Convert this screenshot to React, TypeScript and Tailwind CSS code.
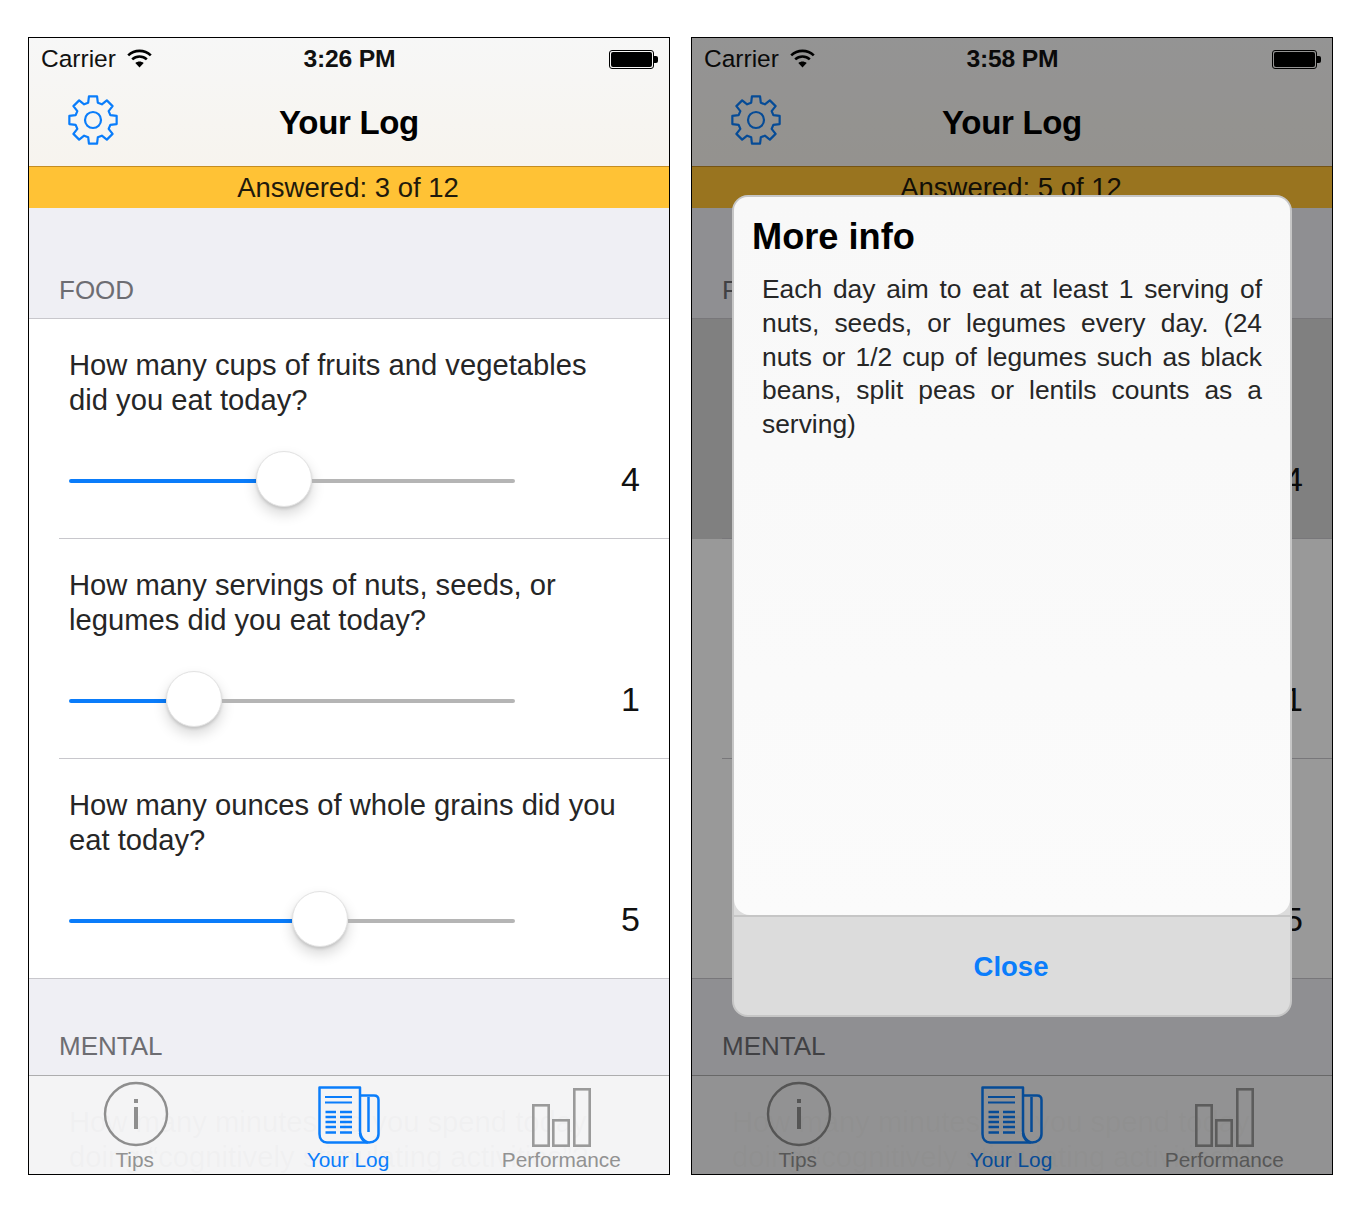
import React from "react";

const BLUE = "#0a7dfb";

function gearPath() {
  const cx = 26, cy = 26, teeth = 8;
  const R = 24, r = 18;
  const pts: string[] = [];
  for (let i = 0; i < teeth; i++) {
    const a = (i * 2 * Math.PI) / teeth - Math.PI / 2;
    const seg = [
      [-0.27, r],
      [-0.17, R],
      [0.17, R],
      [0.27, r],
    ];
    for (const [d, rad] of seg) {
      const t = a + d;
      pts.push(`${(cx + rad * Math.cos(t)).toFixed(2)} ${(cy + rad * Math.sin(t)).toFixed(2)}`);
    }
  }
  return "M" + pts.join("L") + "Z";
}

function Gear() {
  return (
    <svg width="52" height="52" viewBox="0 0 52 52" fill="none" stroke={BLUE} strokeWidth="2.2" strokeLinejoin="round">
      <path d={gearPath()} />
      <circle cx="26" cy="26" r="8" />
    </svg>
  );
}

function Wifi() {
  return (
    <svg width="25" height="19" viewBox="0 0 25 19" fill="none" stroke="#000" strokeWidth="2.6">
      <path d="M1.2 6.4C7.5 .4 17.5 .4 23.8 6.4" />
      <path d="M5.2 10.4C9.3 6.6 15.7 6.6 19.8 10.4" />
      <path d="M12.5 18.6L8.3 14C10.7 12 14.3 12 16.7 14Z" fill="#000" stroke="none" />
    </svg>
  );
}

function Battery() {
  return (
    <div className="flex items-center">
      <div className="w-[45px] h-[19px] rounded-[3px] border border-black p-px">
        <div className="w-full h-full rounded-[2px] bg-black" />
      </div>
      <div className="w-[4px] h-[7px] bg-black rounded-r-[2px]" />
    </div>
  );
}

function InfoIcon() {
  return (
    <svg width="66" height="66" viewBox="0 0 66 66" fill="none" stroke="#8e8e8e">
      <circle cx="33" cy="33" r="31" strokeWidth="2.4" />
      <rect x="31" y="18" width="4" height="4" fill="#8e8e8e" stroke="none" />
      <rect x="31" y="26" width="4" height="22" fill="#8e8e8e" stroke="none" />
    </svg>
  );
}

function NewsIcon() {
  return (
    <svg className="mb-[3px]" width="62" height="58" viewBox="0 0 62 58" fill="none" stroke={BLUE} strokeWidth="2.5" strokeLinejoin="round">
      <path d="M1.5 1.5H42V45C42 50 45 54 49 56.5H9C4.5 56.5 1.5 53 1.5 48Z" />
      <path d="M42 9.5H56C59 9.5 60.5 11 60.5 14V48C60.5 53 56.5 56.5 51 56.5C46 56.5 42 52 42 47" />
      <path d="M50.5 11V46" />
      <path d="M7 11H34M7 16.5H34" strokeWidth="2" />
      <path d="M7.5 26H18M7.5 31H18M7.5 36H18M7.5 41H18M7.5 46.5H18M22 26H34M22 31H34M22 36H34M22 41H34M22 46.5H34" strokeWidth="2.6" />
    </svg>
  );
}

function BarsIcon() {
  return (
    <svg width="60" height="59" viewBox="0 0 60 59" fill="none" stroke="#9a9a9a" strokeWidth="2.6">
      <rect x="1.3" y="17.3" width="15.4" height="40.4" />
      <rect x="21.3" y="32.3" width="15.4" height="25.4" />
      <rect x="42.3" y="1.3" width="15.4" height="56.4" />
    </svg>
  );
}

function Slider({ fill, value }: { fill: number; value: number }) {
  return (
    <div className="flex items-center mt-[34px] pl-10 pr-[29px]">
      <div className="w-[446px] flex items-center h-14">
        <div className="h-[3.5px] mt-[4px] bg-[#0a7cfa] rounded-l-full" style={{ width: fill }} />
        <div className="w-14 h-14 shrink-0 rounded-full bg-white border border-[#e2e2e2] shadow-[0_7px_14px_rgba(0,0,0,0.16),0_2px_3px_rgba(0,0,0,0.12)]" />
        <div className="flex-1 h-[3.5px] mt-[4px] bg-[#b5b5b5] rounded-r-full" />
      </div>
      <div className="flex-1 text-right text-[34px] leading-[40px] text-[#111]">{value}</div>
    </div>
  );
}

function QuestionText({ lines }: { lines: string[] }) {
  return (
    <div className="pl-10 text-[29.2px] leading-[34.5px] text-[#262626]">
      {lines.map((l) => (
        <div key={l} className="whitespace-nowrap">{l}</div>
      ))}
    </div>
  );
}

function Question({ lines, fill, value, last, selected }: { lines: string[]; fill: number; value: number; last?: boolean; selected?: boolean }) {
  return (
    <div className={`h-[220px] relative pt-[29px] ${selected ? "bg-[#d6d6d6]" : "bg-white"}`}>
      <QuestionText lines={lines} />
      <Slider fill={fill} value={value} />
      <div className={`absolute bottom-0 right-0 h-px ${last ? "left-0 bg-[#c8c7cc]" : "left-[30px] bg-[#c8c7cc]"}`} />
    </div>
  );
}

function TabItem({ icon, label, active }: { icon: React.ReactNode; label: string; active?: boolean }) {
  return (
    <div className="flex flex-col items-center">
      <div className="h-[71px] flex items-end justify-center">{icon}</div>
      <div className={`text-[20.8px] leading-[24px] mt-[1px] mr-[2px] ${active ? "text-[#0a7dfb]" : "text-[#929292]"}`}>{label}</div>
    </div>
  );
}

function Screen({ time, answered, selected }: { time: string; answered: number; selected?: boolean }) {
  return (
    <div className="h-full flex flex-col">
      <div className="h-[128px] shrink-0 bg-linear-to-b from-[#f7f7f7] to-[#f7f4ee] flex flex-col">
        <div className="h-[41px] shrink-0 pt-[2px] pl-3 pr-[11px] grid grid-cols-3 items-center">
          <div className="flex items-center gap-[11px] text-[24.5px] text-[#111]">
            <span>Carrier</span>
            <span className="flex -mt-[3px]"><Wifi /></span>
          </div>
          <div className="text-center text-[24.7px] font-bold text-[#111] tracking-[-0.2px] whitespace-nowrap -mt-[2px]">{time}</div>
          <div className="flex justify-end"><Battery /></div>
        </div>
        <div className="relative flex-1 flex items-center justify-center pt-[1px]">
          <div className="text-[33px] font-bold text-black tracking-[-0.3px]">Your Log</div>
          <div className="absolute left-[38px] top-[15px]"><Gear /></div>
        </div>
      </div>
      <div className="h-[42px] shrink-0 bg-[#ffc235] border-t border-[#c48d22] pr-[2px] text-center text-[27.5px] leading-[41px] text-[#1f1a0c]">
        Answered: {answered} of 12
      </div>
      <div className="flex-1 bg-[#efeff4] overflow-hidden">
        <div className="h-[111px] flex items-end pl-[30px] pb-[10px] border-b border-[#c8c7cc]">
          <span className="text-[26px] leading-[36px] text-[#6d6d72]">FOOD</span>
        </div>
        <Question selected={selected} lines={["How many cups of fruits and vegetables", "did you eat today?"]} fill={187} value={4} />
        <Question lines={["How many servings of nuts, seeds, or", "legumes did you eat today?"]} fill={97} value={1} />
        <Question last lines={["How many ounces of whole grains did you", "eat today?"]} fill={223} value={5} />
        <div className="h-[97px] flex items-end pl-[30px] pb-[12px]">
          <span className="text-[26px] leading-[36px] text-[#6d6d72]">MENTAL</span>
        </div>
        <div className="h-[99px] bg-white pt-[29px]">
          <QuestionText lines={["How many minutes did you spend today", "doing \u201Ccognitively stimulating activities\u201D?"]} />
        </div>
      </div>
    </div>
  );
}

function TabBar() {
  return (
    <div className="absolute left-0 right-0 bottom-0 h-[99px] bg-[#f4f4f5]/[0.985] border-t border-[#adadae] grid grid-cols-3">
      <TabItem icon={<InfoIcon />} label="Tips" />
      <TabItem icon={<NewsIcon />} label="Your Log" active />
      <TabItem icon={<BarsIcon />} label="Performance" />
    </div>
  );
}

function Phone({ children }: { children: React.ReactNode }) {
  return (
    <div className="relative w-[642px] h-[1138px] border border-black overflow-hidden bg-white shrink-0">
      {children}
    </div>
  );
}

function Dialog() {
  return (
    <div className="absolute left-[40px] top-[157px] w-[560px] h-[822px] rounded-[16px] bg-[#dcdcdc] border-2 border-[#c6c6c6] flex flex-col overflow-hidden">
      <div className="h-[718px] shrink-0 rounded-b-[16px] bg-linear-to-b from-[#f8f8f8] to-[#fbfbfb] px-[18px] pt-[17px]">
        <div className="text-[36.2px] leading-[46px] font-bold text-black">More info</div>
        <p className="mt-[13px] ml-[10px] w-[500px] text-[26.4px] leading-[33.8px] text-[#262626] text-justify">
          Each day aim to eat at least 1 serving of nuts, seeds, or legumes every day. (24 nuts or 1/2 cup of legumes such as black beans, split peas or lentils counts as a serving)
        </p>
      </div>
      <div className="flex-1 border-t-2 border-[#c6c6c6] flex items-center justify-center pt-[1px] pr-[2px] text-[27.5px] font-bold text-[#0a7dfb]">
        Close
      </div>
    </div>
  );
}

export default function App() {
  return (
    <div className="min-h-[1209px] bg-white pt-[37px] pl-[28px] flex gap-[21px] font-['Liberation_Sans',Arial,sans-serif]">
      <Phone>
        <Screen time="3:26 PM" answered={3} />
        <TabBar />
      </Phone>
      <Phone>
        <Screen time="3:58 PM" answered={5} selected />
        <TabBar />
        <div className="absolute inset-0 bg-black/40" />
        <Dialog />
      </Phone>
    </div>
  );
}
